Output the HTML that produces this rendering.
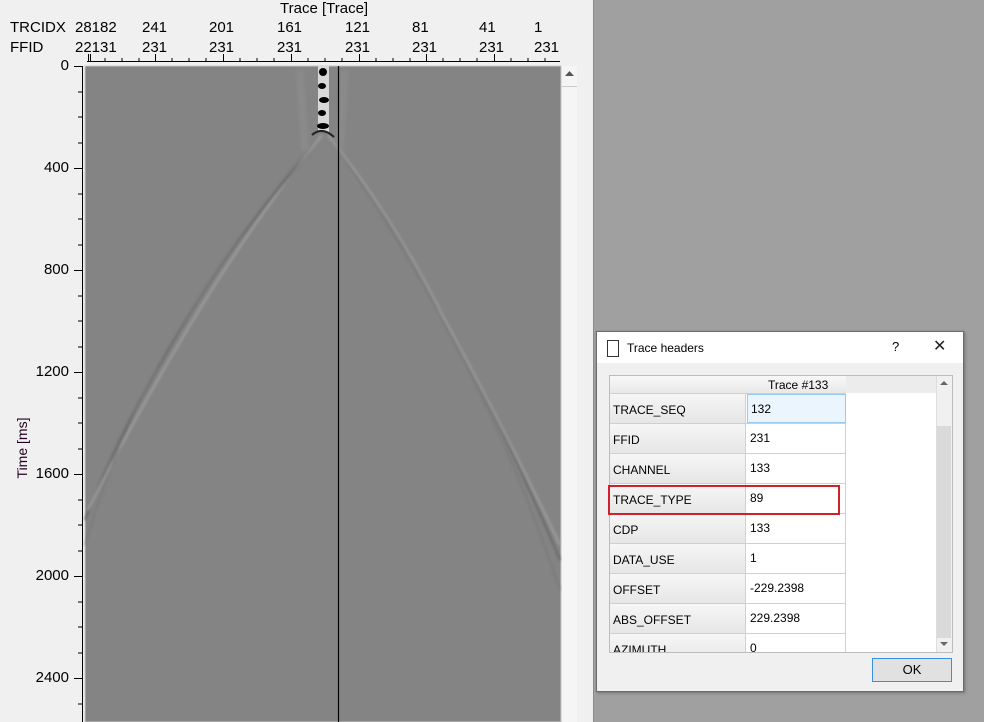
<!DOCTYPE html>
<html><head><meta charset="utf-8"><style>
body{margin:0;width:984px;height:722px;overflow:hidden;background:#f0f0f0;font-family:"Liberation Sans",sans-serif;position:relative}
.a{position:absolute}
.lbl{font-size:15px;color:#000;position:absolute;white-space:nowrap}
.dlg{position:absolute;left:596px;top:331px;width:366px;height:359px;background:#f0f0f0;border:1px solid #6a6a6a;box-shadow:1px 1px 3px rgba(0,0,0,.3)}
.row{position:absolute;left:0;height:29px;border-bottom:1px solid #d0d0d0;width:236px;font-size:12px}
.c1{position:absolute;left:0;width:136px;height:29px;background:linear-gradient(#f6f6f6,#e6e6e6);border-right:1px solid #d0d0d0;line-height:32px;padding-left:3px;box-sizing:border-box}
.c2{position:absolute;left:137px;width:99px;height:29px;background:#fff;border-right:1px solid #d0d0d0;line-height:28px;padding-left:3px;box-sizing:border-box}
</style></head><body>
<div class="a" style="left:593px;top:0;width:1px;height:722px;background:#8c8c8c"></div>
<div class="a" style="left:594px;top:0;width:390px;height:722px;background:#a0a0a0"></div>

<svg class="a" style="left:0;top:0" width="593" height="722">
<rect x="85" y="66" width="476" height="656" fill="#848484" stroke="#c8c8c8" stroke-width="1"/>
<defs><filter id="b"><feGaussianBlur stdDeviation="1.3"/></filter></defs>
<g fill="none" filter="url(#b)">
<path d="M318 140 Q240 230 180 330 Q120 430 85 520" stroke="#666" stroke-width="2"/>
<path d="M322 135 Q250 225 190 325 Q130 425 88 510" stroke="#a8a8a8" stroke-width="1.5"/>
<path d="M312 150 Q230 245 170 345 Q115 440 85 545" stroke="#767676" stroke-width="1.2"/>
<path d="M332 140 Q400 230 450 330 Q510 440 560 560" stroke="#666" stroke-width="2"/>
<path d="M328 135 Q395 220 445 320 Q505 430 560 545" stroke="#a8a8a8" stroke-width="1.5"/>
<path d="M338 150 Q405 245 455 345 Q515 455 560 590" stroke="#767676" stroke-width="1.2"/>
<path d="M300 70 L305 150 M345 70 L340 150" stroke="#8e8e8e" stroke-width="8" opacity=".6"/>
</g>
<g>
<rect x="318" y="66" width="11" height="66" fill="#d8d8d8"/>
<ellipse cx="323" cy="72" rx="4" ry="4" fill="#000"/><ellipse cx="322" cy="86" rx="4" ry="3" fill="#000"/>
<ellipse cx="324" cy="100" rx="5" ry="3" fill="#000"/><ellipse cx="322" cy="113" rx="4" ry="3" fill="#000"/>
<ellipse cx="323" cy="126" rx="6" ry="3" fill="#000"/><path d="M312 135 Q322 126 334 137" stroke="#222" stroke-width="2" fill="none"/>
</g>
<line x1="338.5" y1="66" x2="338.5" y2="722" stroke="#000" stroke-width="1.2"/>
<line x1="87" y1="61.5" x2="560" y2="61.5" stroke="#000"/>
<g stroke="#000">
<line x1="88.5" y1="54" x2="88.5" y2="61"/><line x1="90.5" y1="54" x2="90.5" y2="61"/>
<line x1="155.5" y1="54" x2="155.5" y2="61"/><line x1="223.5" y1="54" x2="223.5" y2="61"/>
<line x1="291.5" y1="54" x2="291.5" y2="61"/><line x1="359.5" y1="54" x2="359.5" y2="61"/>
<line x1="426.5" y1="54" x2="426.5" y2="61"/><line x1="494.5" y1="54" x2="494.5" y2="61"/>
<path d="M105 58V61M122 58V61M139 58V61M172 58V61M189 58V61M206 58V61M240 58V61M257 58V61M274 58V61M308 58V61M325 58V61M342 58V61M376 58V61M393 58V61M410 58V61M443 58V61M460 58V61M477 58V61M511 58V61M528 58V61M545 58V61"/>
<line x1="82.5" y1="66" x2="82.5" y2="722"/>
<path d="M74 66.5H83M74 168.5H83M74 270.5H83M74 372.5H83M74 474.5H83M74 576.5H83M74 678.5H83"/>
<path d="M78 92H83M78 117H83M78 143H83M78 194H83M78 219H83M78 245H83M78 296H83M78 321H83M78 347H83M78 398H83M78 423H83M78 449H83M78 500H83M78 525H83M78 551H83M78 602H83M78 627H83M78 653H83M78 704H83"/>
</g>
<rect x="562" y="66" width="15" height="656" fill="#f5f5f5"/>
<line x1="562" y1="86.5" x2="577" y2="86.5" stroke="#ccc"/>
<path d="M565 76 L569.5 71 L574 76Z" fill="#555"/>
</svg>

<div class="lbl" style="left:280px;top:0">Trace [Trace]</div>
<div class="lbl" style="left:10px;top:19px">TRCIDX</div>
<div class="lbl" style="left:10px;top:39px">FFID</div>
<div class="lbl" style="left:75px;top:19px">28182</div>
<div class="lbl" style="left:75px;top:39px">22131</div>
<div class="lbl" style="left:142px;top:19px">241</div><div class="lbl" style="left:142px;top:39px">231</div>
<div class="lbl" style="left:209px;top:19px">201</div><div class="lbl" style="left:209px;top:39px">231</div>
<div class="lbl" style="left:277px;top:19px">161</div><div class="lbl" style="left:277px;top:39px">231</div>
<div class="lbl" style="left:345px;top:19px">121</div><div class="lbl" style="left:345px;top:39px">231</div>
<div class="lbl" style="left:412px;top:19px">81</div><div class="lbl" style="left:412px;top:39px">231</div>
<div class="lbl" style="left:479px;top:19px">41</div><div class="lbl" style="left:479px;top:39px">231</div>
<div class="lbl" style="left:534px;top:19px">1</div><div class="lbl" style="left:534px;top:39px">231</div>

<div class="lbl" style="left:0;width:69px;text-align:right;top:57px">0</div>
<div class="lbl" style="left:0;width:69px;text-align:right;top:159px">400</div>
<div class="lbl" style="left:0;width:69px;text-align:right;top:261px">800</div>
<div class="lbl" style="left:0;width:69px;text-align:right;top:363px">1200</div>
<div class="lbl" style="left:0;width:69px;text-align:right;top:465px">1600</div>
<div class="lbl" style="left:0;width:69px;text-align:right;top:567px">2000</div>
<div class="lbl" style="left:0;width:69px;text-align:right;top:669px">2400</div>
<div class="lbl" style="left:-18px;top:440px;width:80px;height:16px;line-height:16px;text-align:center;transform:rotate(-90deg);transform-origin:40px 8px;font-size:14px;color:#200020">Time [ms]</div>

<div class="dlg">
<div class="a" style="left:0;top:0;width:366px;height:31px;background:#fff"></div>
<div class="a" style="left:10px;top:8px;width:10px;height:15px;border:1px solid #333"></div>
<div class="a" style="left:30px;top:9px;font-size:12px">Trace headers</div>
<div class="a" style="left:295px;top:7px;font-size:13px">?</div>
<div class="a" style="left:336px;top:4px;font-size:16px;font-weight:300;color:#222">✕</div>
<div class="a" style="left:12px;top:43px;width:342px;height:276px;background:#fff;border:1px solid #bcbcbc;overflow:hidden">
 <div class="a" style="left:0;top:0;width:236px;height:17px;background:linear-gradient(#f8f8f8,#e8e8e8);border-bottom:1px solid #d0d0d0;font-size:12px;text-align:right"><span style="position:absolute;left:158px;top:2px">Trace #133</span></div>
 <div class="a" style="left:236px;top:0;width:90px;height:17px;background:#ececec"></div>
 <div class="row" style="top:18px"><div class="c1">TRACE_SEQ</div><div class="c2" style="background:#eaf5fd;border:1px solid #99c9ef">132</div></div>
 <div class="row" style="top:48px"><div class="c1">FFID</div><div class="c2">231</div></div>
 <div class="row" style="top:78px"><div class="c1">CHANNEL</div><div class="c2">133</div></div>
 <div class="row" style="top:108px"><div class="c1">TRACE_TYPE</div><div class="c2">89</div></div>
 <div class="row" style="top:138px"><div class="c1">CDP</div><div class="c2">133</div></div>
 <div class="row" style="top:168px"><div class="c1">DATA_USE</div><div class="c2">1</div></div>
 <div class="row" style="top:198px"><div class="c1">OFFSET</div><div class="c2">-229.2398</div></div>
 <div class="row" style="top:228px"><div class="c1">ABS_OFFSET</div><div class="c2">229.2398</div></div>
 <div class="row" style="top:258px"><div class="c1">AZIMUTH</div><div class="c2">0</div></div>
 <div class="a" style="left:326px;top:0;width:16px;height:276px;background:#f0f0f0;border-left:1px solid #ddd"></div>
 <div class="a" style="left:327px;top:50px;width:14px;height:212px;background:#dadada"></div>
 <div class="a" style="left:330px;top:5px;width:0;height:0;border-left:4px solid transparent;border-right:4px solid transparent;border-bottom:4px solid #666"></div>
 <div class="a" style="left:330px;top:266px;width:0;height:0;border-left:4px solid transparent;border-right:4px solid transparent;border-top:4px solid #666"></div>
</div>
<div class="a" style="left:11px;top:153px;width:232px;height:30px;border:2px solid #d0202a;box-sizing:border-box"></div>
<div class="a" style="left:275px;top:326px;width:78px;height:22px;background:#e1e1e1;border:1px solid #3c8ee0;font-size:13px;text-align:center;line-height:22px">OK</div>
</div>
</body></html>
